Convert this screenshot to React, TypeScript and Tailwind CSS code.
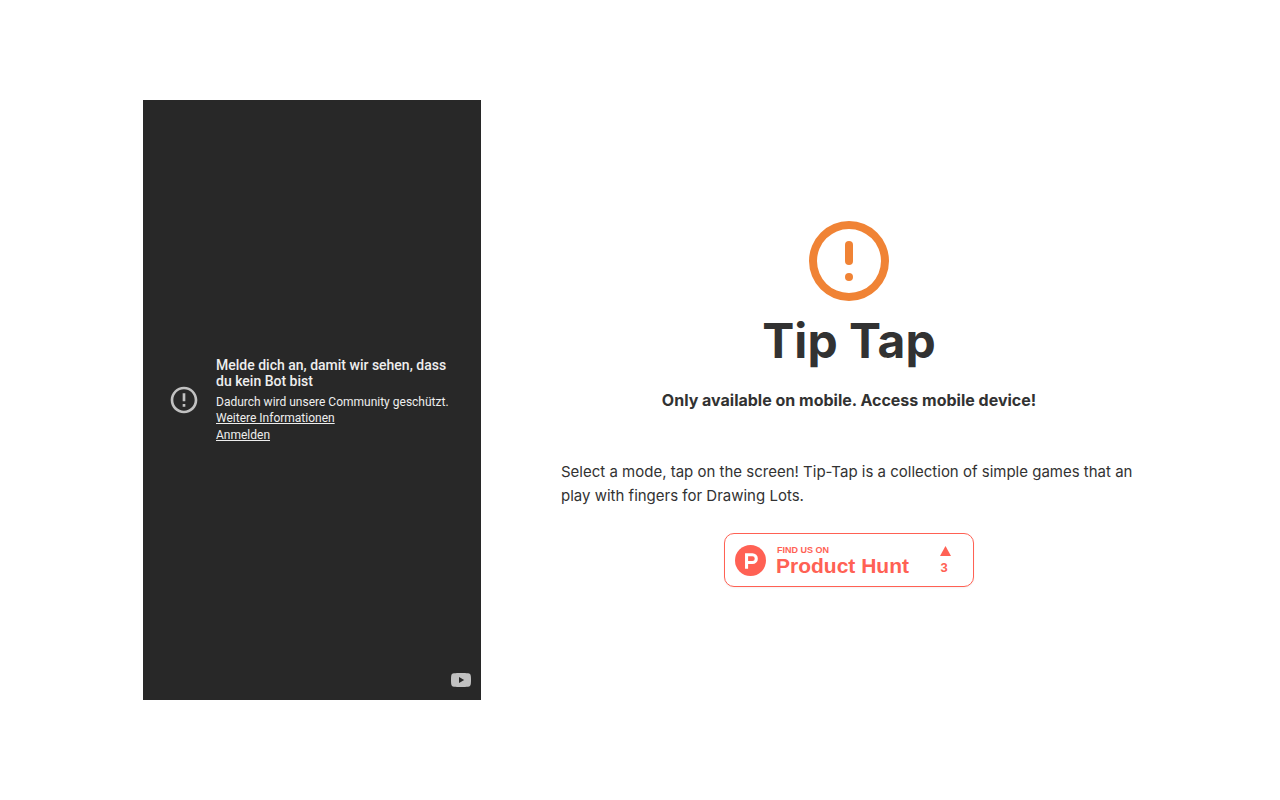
import React from 'react';

function AlertIcon({ className }: { className?: string }) {
  return (
    <svg className={className} viewBox="0 0 24 24" fill="currentColor" aria-hidden="true">
      <path
        fillRule="evenodd"
        d="M12 2a10 10 0 1 0 0 20 10 10 0 0 0 0-20Zm0 2a8 8 0 1 1 0 16 8 8 0 0 1 0-16Z"
      />
      <rect x="11" y="7" width="2" height="6" rx="1" />
      <circle cx="12" cy="16" r="1" />
    </svg>
  );
}

function VideoErrorIcon({ className }: { className?: string }) {
  return (
    <svg className={className} viewBox="0 0 24 24" fill="currentColor" aria-hidden="true">
      <path d="M11 15h2v2h-2zm0-8h2v6h-2zm.99-5C6.47 2 2 6.48 2 12s4.47 10 9.99 10C17.52 22 22 17.52 22 12S17.52 2 11.99 2zM12 20c-4.42 0-8-3.58-8-8s3.58-8 8-8 8 3.58 8 8-3.58 8-8 8z" />
    </svg>
  );
}

function VideoPlayer() {
  return (
    <section className="relative w-[338px] h-[600px] shrink-0 flex items-center pl-[25px] pr-5 bg-[#282828] text-[#eeeeee] font-['Roboto',sans-serif]">
      <VideoErrorIcon className="size-8 mr-4 shrink-0 text-[#c1c1c1]" />
      <div className="text-xs">
        <h2 className="text-sm leading-4 font-medium mb-[5px]">
          Melde dich an, damit wir sehen, dass du kein Bot bist
        </h2>
        <p className="mb-px">
          Dadurch wird unsere Community geschützt.{' '}
          <a href="#info" className="underline">Weitere Informationen</a>
        </p>
        <a href="#login" className="block underline">Anmelden</a>
      </div>
      <a href="#youtube" aria-label="YouTube" className="absolute right-[10px] bottom-[13px]">
        <svg className="w-5 h-[14px]" viewBox="0 0 20 14">
          <path
            fill="#c1c1c1"
            d="M3 .3C6 0 14 0 17 .3c1.800.2 2.600 1 2.800 2.700.3 2.500.3 5.500 0 8-.2 1.700-1 2.500-2.800 2.700-3 .3-11 .3-14 0C1.200 13.500.4 12.700.2 11c-.3-2.500-.3-5.500 0-8C.4 1.300 1.200.5 3 .3Z"
          />
          <path fill="#282828" d="m8 4 5.200 3L8 10z" />
        </svg>
      </a>
    </section>
  );
}

function ProductHuntBadge() {
  return (
    <a
      href="#product-hunt"
      className="w-[250px] h-[54px] flex items-center pl-[10px] pr-[22px] rounded-[10px] border border-[#ff6154] bg-white text-[#ff6154] font-bold font-['Liberation_Sans',sans-serif] shadow-xs"
    >
      <svg className="size-[31px] mr-[10px]" viewBox="0 0 31 31" aria-hidden="true">
        <circle cx="15.500" cy="15.500" r="15.500" fill="#ff6154" />
        <path
          fill="#fff"
          fillRule="evenodd"
          d="M10.030 8.200h7.400a5.400 5.400 0 0 1 0 10.850h-4.340v4.650h-3.060zM13.090 11.300v4.650h4.340a2.320 2.320 0 0 0 0-4.650z"
        />
      </svg>
      <span className="flex-1 flex flex-col pt-[2px]">
        <span className="text-[9px] leading-[10px] pl-px">FIND US ON</span>
        <span className="text-[21px] leading-[22px]">Product Hunt</span>
      </span>
      <span className="flex flex-col items-center pt-[2px] text-[13px] leading-4">
        <svg className="w-[11px] h-[10px] mb-1" viewBox="0 0 11 10" aria-hidden="true">
          <path fill="currentColor" d="M5.500 0 11 10H0z" />
        </svg>
        <span className="pr-[3px]">3</span>
      </span>
    </a>
  );
}

export default function App() {
  return (
    <main className="min-h-screen flex items-center justify-center gap-20 bg-white text-[#323232] font-['Inter',sans-serif]">
      <VideoPlayer />
      <section className="flex-1 max-w-xl flex flex-col items-center">
        <AlertIcon className="size-24 text-[#f08335]" />
        <h1 className="text-5xl leading-[64px] font-bold">Tip Tap</h1>
        <p className="mt-[15px] mb-12 font-bold">Only available on mobile. Access mobile device!</p>
        <p className="mb-[25px] text-[15px] leading-6">
          Select a mode, tap on the screen! Tip-Tap is a collection of simple games that an play
          with fingers for Drawing Lots.
        </p>
        <ProductHuntBadge />
      </section>
    </main>
  );
}
